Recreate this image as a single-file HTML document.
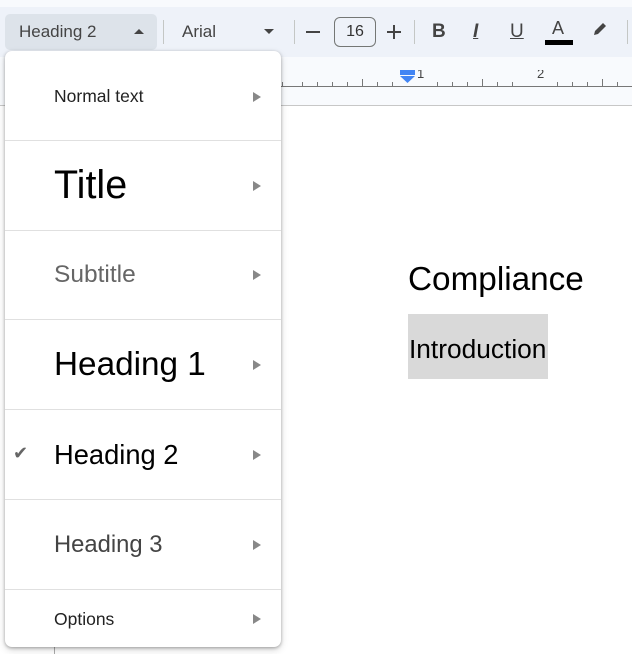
<!DOCTYPE html>
<html><head><style>
*{margin:0;padding:0;box-sizing:border-box}
body{width:632px;height:654px;overflow:hidden;background:#fff;font-family:"Liberation Sans",Arial,sans-serif;position:relative}
.a{position:absolute}
.tb{left:0;top:7px;width:632px;height:50px;background:#eef2f9}
.top{left:0;top:0;width:632px;height:7px;background:#f8fafd}
.rul{left:0;top:57px;width:632px;height:49px;background:#f8fafd;border-bottom:1px solid #c7c7c7}
.sep{width:1px;height:24px;background:#c4c7c5;top:20px}
.t{color:#444;font-size:17px}
.menu{left:5px;top:51px;width:276px;height:596px;background:#fff;border-radius:7px;box-shadow:0 1px 3px rgba(0,0,0,.3),0 3px 8px rgba(0,0,0,.15)}
.it{position:absolute;left:0;width:276px;border-bottom:1px solid #e0e0e0;display:flex;align-items:center}
.it span.l{position:absolute;left:49px;white-space:nowrap}
.it .ar{position:absolute;left:248px;width:0;height:0;border-left:8px solid #888;border-top:5px solid transparent;border-bottom:5px solid transparent}
</style></head><body>
<div class="a top"></div>
<div class="a tb"></div>
<div class="a" style="left:5px;top:14px;width:152px;height:36px;background:#dde3ea;border-radius:5px"></div>
<div class="a t" style="left:19px;top:22px">Heading 2</div>
<div class="a" style="left:134px;top:29px;border-left:5px solid transparent;border-right:5px solid transparent;border-bottom:5px solid #444"></div>
<div class="a sep" style="left:163px"></div>
<div class="a t" style="left:182px;top:22px">Arial</div>
<div class="a" style="left:264px;top:29px;border-left:5px solid transparent;border-right:5px solid transparent;border-top:5px solid #444"></div>
<div class="a sep" style="left:294px"></div>
<div class="a" style="left:306px;top:31px;width:14px;height:2px;background:#444"></div>
<div class="a" style="left:334px;top:17px;width:42px;height:30px;border:1px solid #747775;border-radius:6px;font-size:16px;color:#333;text-align:center;line-height:28px">16</div>
<div class="a" style="left:387px;top:31px;width:14px;height:2px;background:#444"></div>
<div class="a" style="left:393px;top:25px;width:2px;height:14px;background:#444"></div>
<div class="a sep" style="left:414px"></div>
<div class="a" style="left:432px;top:21px;font-size:19px;font-weight:bold;color:#444">B</div>
<div class="a" style="left:473px;top:21px;font-size:19px;font-style:italic;font-weight:bold;color:#444;text-decoration:underline">I</div>
<div class="a" style="left:510px;top:21px;font-size:19px;color:#444;text-decoration:underline">U</div>
<div class="a" style="left:552px;top:18px;font-size:18px;color:#444">A</div>
<div class="a" style="left:545px;top:40px;width:28px;height:5px;background:#000"></div>
<svg class="a" style="left:591px;top:20px" width="18" height="18" viewBox="0 0 18 18"><path d="M3 15l1-4 8-8 3 3-8 8z" fill="#444"/></svg>
<div class="a" style="left:627px;top:20px;width:1px;height:24px;background:#c4c7c5"></div>
<div class="a rul"></div>
<div class="a" style="left:270px;top:86px;width:362px;height:1px;background:#777"></div>
<svg class="a" style="left:270px;top:70px" width="362" height="17">
<g stroke="#777" stroke-width="1">
<line x1="12.5" y1="12" x2="12.5" y2="16"/><line x1="32.5" y1="12" x2="32.5" y2="16"/><line x1="47.5" y1="12" x2="47.5" y2="16"/><line x1="62.5" y1="12" x2="62.5" y2="16"/><line x1="77.5" y1="12" x2="77.5" y2="16"/><line x1="92.5" y1="9" x2="92.5" y2="16"/><line x1="107.5" y1="12" x2="107.5" y2="16"/><line x1="122.5" y1="12" x2="122.5" y2="16"/><line x1="167.5" y1="12" x2="167.5" y2="16"/><line x1="182.5" y1="12" x2="182.5" y2="16"/><line x1="197.5" y1="12" x2="197.5" y2="16"/><line x1="212.5" y1="9" x2="212.5" y2="16"/><line x1="227.5" y1="12" x2="227.5" y2="16"/><line x1="242.5" y1="12" x2="242.5" y2="16"/><line x1="287.5" y1="12" x2="287.5" y2="16"/><line x1="302.5" y1="12" x2="302.5" y2="16"/><line x1="317.5" y1="12" x2="317.5" y2="16"/><line x1="332.5" y1="9" x2="332.5" y2="16"/><line x1="347.5" y1="12" x2="347.5" y2="16"/>
</g>
<rect x="130" y="0" width="15" height="5" fill="#4285f4"/><path d="M130 6h15l-7.5 7z" fill="#4285f4"/>
<text x="147" y="8" font-size="13" fill="#444" font-family="Liberation Sans">1</text>
<text x="267" y="8" font-size="13" fill="#444" font-family="Liberation Sans">2</text>
</svg>
<div class="a" style="left:54px;top:630px;width:1px;height:24px;background:#aaa"></div>
<div class="a" style="left:408px;top:261px;font-size:33.3px;color:#000">Compliance</div>
<div class="a" style="left:408px;top:314px;width:140px;height:65px;background:#d9d9d9"></div>
<div class="a" style="left:409px;top:334px;font-size:26.3px;color:#000">Introduction</div>
<div class="a menu">
<div class="it" style="top:0;height:90px"><span class="l" style="font-size:17.5px;color:#222;top:35px">Normal text</span><i class="ar" style="top:41px"></i></div>
<div class="it" style="top:90px;height:90px"><span class="l" style="font-size:39.5px;color:#000;top:22px">Title</span><i class="ar" style="top:40px"></i></div>
<div class="it" style="top:180px;height:89px"><span class="l" style="font-size:24.5px;color:#666;top:30px">Subtitle</span><i class="ar" style="top:39px"></i></div>
<div class="it" style="top:269px;height:90px"><span class="l" style="font-size:33.3px;color:#000;top:26px">Heading 1</span><i class="ar" style="top:40px"></i></div>
<div class="it" style="top:359px;height:90px"><span style="position:absolute;left:8px;top:33px;font-size:18px;color:#666">✔</span><span class="l" style="font-size:27.3px;color:#000;top:29px">Heading 2</span><i class="ar" style="top:40px"></i></div>
<div class="it" style="top:449px;height:90px"><span class="l" style="font-size:23.8px;color:#444;top:31px">Heading 3</span><i class="ar" style="top:40px"></i></div>
<div class="it" style="top:539px;height:57px;border-bottom:none"><span class="l" style="font-size:17.5px;color:#222;top:19px">Options</span><i class="ar" style="top:24px"></i></div>
</div>
</body></html>
